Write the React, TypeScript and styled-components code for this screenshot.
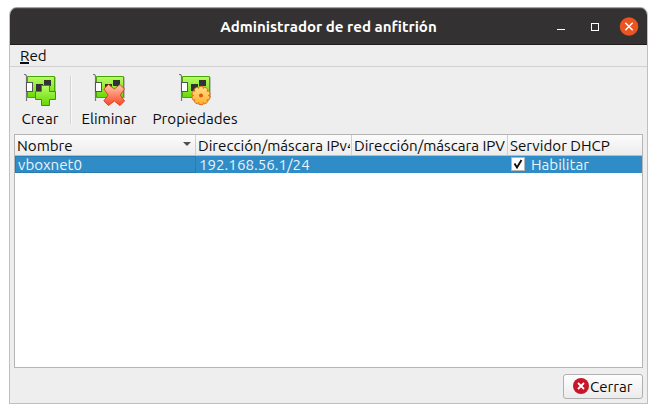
import React from "react";
import styled, { createGlobalStyle } from "styled-components";

const GlobalStyle = createGlobalStyle`
  * { box-sizing: border-box; }
  body {
    margin: 0;
    background: #fff;
    overflow: hidden;
    font: 15.15px/18px Ubuntu, "Noto Sans", sans-serif;
    color: #0b0b0b;
  }
`;

const Page = styled.div`
  height: 413px;
  padding: 7px 9px 9px;
`;

const Window = styled.main`
  display: flex;
  flex-direction: column;
  width: 639px;
  height: 397px;
  border: 1px solid #c0c0c0;
  border-top-color: #a3a3a3;
  border-radius: 8px 8px 0 0;
  background: #eeeeee;
  overflow: hidden;
`;

const Text = styled.span`
  display: inline-block;
  white-space: pre;
`;

const TitleBar = styled.header`
  display: grid;
  grid-template-columns: 1fr auto 1fr;
  align-items: center;
  flex: 0 0 37px;
  border-top: 1px solid #4c4a4a;
  border-bottom: 1px solid #1f1e1e;
  background: #333132;
  color: #fff;
`;

const Title = styled.h1`
  grid-column: 2;
  margin: 0;
  font-size: 15.1px;
  line-height: 20px;
  font-weight: 700;
`;

const WindowControls = styled.div`
  display: flex;
  justify-content: flex-end;
  padding-right: 8px;
`;

const MenuBar = styled.nav`
  flex: 0 0 22px;
  padding: 2px 10px 0;
  border-bottom: 1px solid #d2d2d2;
`;

const Mnemonic = styled.span`
  display: inline-block;
  height: 17px;
  border-bottom: 2px solid #0b0b0b;
  line-height: 18px;
`;

const Toolbar = styled.div`
  display: flex;
  flex: 0 0 67px;
  padding: 5px 0 0 4px;
`;

const ToolButton = styled.button<{ $width: number }>`
  display: flex;
  flex-direction: column;
  align-items: center;
  width: ${(p) => p.$width}px;
  padding: 0;
  border: 0;
  background: none;
  color: inherit;
  font: inherit;

  svg { display: block; margin-bottom: 4px; }
`;

const Separator = styled.span`
  width: 1px;
  height: 48px;
  margin: 4px 2px 0 4px;
  background: #d4d4d4;
  box-shadow: 1px 0 #f8f8f8;
`;

const Table = styled.section`
  height: 234px;
  margin: 0 4px;
  border: 1px solid #b5b5b5;
  background: #fff;
`;

const Row = styled.div`
  display: grid;
  grid-template-columns: 181px 156px 156px 1fr;
`;

const HeaderRow = styled(Row)`
  height: 21px;
  border-bottom: 1px solid #bcbcbc;
  background: linear-gradient(#fcfcfc, #ececec);
`;

const HeaderCell = styled.div`
  display: flex;
  justify-content: space-between;
  align-items: flex-start;
  overflow: hidden;
  padding: 2px 1px 0 2px;
  border-right: 1px solid #cfcfcf;

  &:last-child { border-right: 0; }
  ${Text} { min-width: 0; overflow: hidden; }
  svg { flex: none; margin: 5px 3px 0 0; }
`;

const SelectedRow = styled(Row)`
  height: 17px;
  background: #308cc6;
  color: #eaf3fa;
`;

const Cell = styled.div<{ $current?: boolean }>`
  display: flex;
  align-items: flex-start;
  height: 17px;
  padding-left: 3px;
  line-height: 18px;
  box-shadow: ${(p) => (p.$current ? "inset 0 0 0 1px #2a7cb0" : "none")};
`;

const CheckBox = styled.span`
  display: flex;
  width: 14px;
  height: 14px;
  margin: 1px 6px 0 0;
  border: 1px solid #b6b6b6;
  background: #fff;
`;

const Footer = styled.footer`
  display: flex;
  justify-content: flex-end;
  padding: 6px 4px 0;
`;

const CloseButton = styled.button`
  display: flex;
  align-items: center;
  gap: 1px;
  width: 80px;
  height: 25px;
  padding: 0 0 0 9px;
  border: 1px solid #b0b0b0;
  border-radius: 3px;
  background: linear-gradient(#fefefe, #ebebeb);
  color: inherit;
  font: inherit;

  svg { margin-top: -1px; }
`;

type Badge = "add" | "remove" | "settings";

const polar = (radius: number, angle: number) =>
  `${(22 + radius * Math.cos(angle)).toFixed(2)} ${(22 + radius * Math.sin(angle)).toFixed(2)}`;

const TEETH = 10;
const gearPath = Array.from({ length: TEETH }, (_, i) => {
  const step = (Math.PI * 2) / TEETH;
  const start = i * step - Math.PI / 2 - step / 2;
  return `${i ? "L" : "M"}${polar(7.4, start)}L${polar(9.2, start + step * 0.16)}A9.6 9.6 0 0 1 ${polar(9.2, start + step * 0.84)}`;
}).join("") + "Z";

function CardIcon({ badge }: { badge: Badge }) {
  return (
    <svg width="32" height="34" viewBox="0 0 32 34">
      <defs>
        <linearGradient id={`board-${badge}`} x2="0" y2="1">
          <stop stopColor="#bafb65" /><stop offset="1" stopColor="#68d807" />
        </linearGradient>
        <linearGradient id={`badge-${badge}`} x2="0" y2="1">
          <stop stopColor={badge === "add" ? "#b5fc65" : badge === "remove" ? "#ffc9ac" : "#ffe18b"} />
          <stop offset="1" stopColor={badge === "add" ? "#65d600" : badge === "remove" ? "#fa4527" : "#ffaf2c"} />
        </linearGradient>
      </defs>
      <path d="M5 5H32V26H5Z" fill="#bcbcbc" />
      <path d="M3.5 4.5H30.5V25.5H3.5Z" fill={`url(#board-${badge})`} stroke="#46a704" />
      <path d="M0 2.5H1.5L2.5 4V29" fill="none" stroke="#777" strokeWidth="1.2" />
      <rect x="2.5" y="10.5" width="6" height="9" fill="#fff" stroke="#555" />
      <path d="M20 8H27V14H20ZM12 12H19V19H12Z" fill="#333" />
      {badge === "add" && (
        <path d="M17.5 13.5H25.5V19.5H31.5V27.5H25.5V33.5H17.5V27.5H11.5V19.5H17.5Z" fill="url(#badge-add)" stroke="#3f9408" strokeLinejoin="round" />
      )}
      {badge === "remove" && (
        <path d="M15.5 12.5L21.3 17L27 12.5L31.5 17L27.3 23L31.5 29L27 33.5L21.3 29L15.5 33.5L10.8 29L15.2 23L10.8 17Z" fill="url(#badge-remove)" stroke="#d4481f" strokeLinejoin="round" />
      )}
      {badge === "settings" && (
        <g transform="translate(0 1.5)">
          <path d={gearPath} fill="url(#badge-settings)" stroke="#df6c12" strokeLinejoin="round" />
          <circle cx="22" cy="22" r="2" fill="#e7530b" />
        </g>
      )}
    </svg>
  );
}

export default function App() {
  return (
    <>
      <GlobalStyle />
      <Page>
        <Window>
          <TitleBar>
            <Title><Text>Administrador de red anfitrión</Text></Title>
            <WindowControls>
              <svg width="84" height="20" viewBox="0 0 84 20">
                <path d="M2 12.5H10" stroke="#fff" />
                <rect x="36.5" y="6.5" width="7" height="7" fill="none" stroke="#fff" />
                <circle cx="74" cy="9.5" r="9.3" fill="#e95420" />
                <path d="M70.3 5.8L77.7 13.2M77.7 5.8L70.3 13.2" stroke="#fff" strokeWidth="1.5" />
              </svg>
            </WindowControls>
          </TitleBar>
          <MenuBar><Text><Mnemonic>R</Mnemonic>ed</Text></MenuBar>
          <Toolbar>
            <ToolButton $width={52}><CardIcon badge="add" /><Text>Crear</Text></ToolButton>
            <Separator />
            <ToolButton $width={72}><CardIcon badge="remove" /><Text>Eliminar</Text></ToolButton>
            <ToolButton $width={100}><CardIcon badge="settings" /><Text>Propiedades</Text></ToolButton>
          </Toolbar>
          <Table>
            <HeaderRow>
              <HeaderCell>
                <Text>Nombre</Text>
                <svg width="8" height="5" viewBox="0 0 8 5"><path d="M0 0H8L4 4Z" fill="#505050" /></svg>
              </HeaderCell>
              <HeaderCell><Text>Dirección/máscara IPv4</Text></HeaderCell>
              <HeaderCell><Text>Dirección/máscara IPV</Text></HeaderCell>
              <HeaderCell><Text>Servidor DHCP</Text></HeaderCell>
            </HeaderRow>
            <SelectedRow>
              <Cell $current><Text>vboxnet0</Text></Cell>
              <Cell><Text>192.168.56.1/24</Text></Cell>
              <Cell />
              <Cell>
                <CheckBox>
                  <svg width="12" height="12" viewBox="0 0 12 12"><path d="M2.5 5.5L5 9.5L9.5 2" fill="none" stroke="#111" strokeWidth="1.9" /></svg>
                </CheckBox>
                <Text>Habilitar</Text>
              </Cell>
            </SelectedRow>
          </Table>
          <Footer>
            <CloseButton>
              <svg width="16" height="16" viewBox="0 0 16 16">
                <circle cx="8" cy="8" r="8" fill="#c7162b" />
                <path d="M5 5L11 11M11 5L5 11" stroke="#fff" strokeWidth="1.8" />
              </svg>
              <Text>Cerrar</Text>
            </CloseButton>
          </Footer>
        </Window>
      </Page>
    </>
  );
}
